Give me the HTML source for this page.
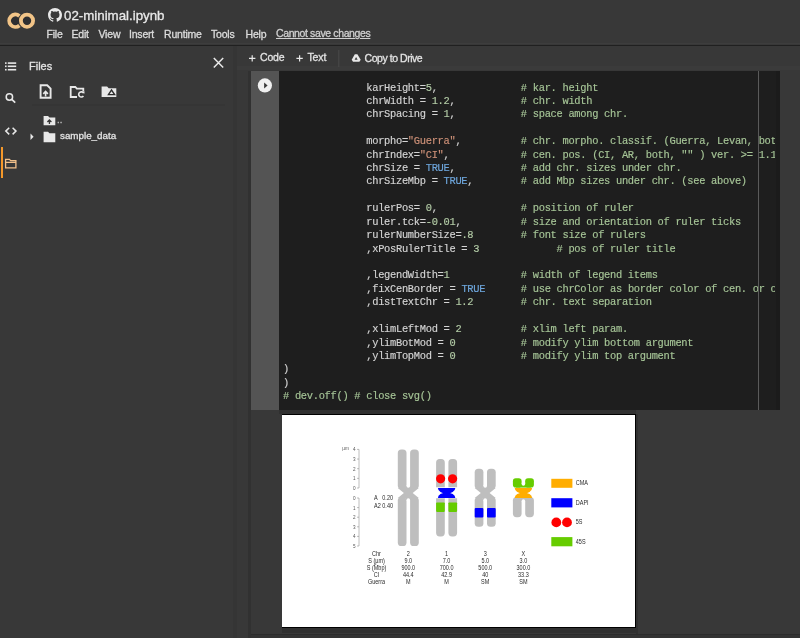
<!DOCTYPE html>
<html><head><meta charset="utf-8">
<style>
*{margin:0;padding:0;box-sizing:border-box}
html,body{width:800px;height:638px;overflow:hidden;background:#383838;will-change:transform;font-family:"Liberation Sans",sans-serif;color:#e3e3e3}
.a{position:absolute}
.t{position:absolute;white-space:pre;line-height:1;-webkit-text-stroke:0.3px currentColor}
#hdrline{left:0;top:45px;width:800px;height:1px;background:#202020}
.menu{font-size:10.5px;color:#dcdcdc;top:28.8px;letter-spacing:-0.2px}
#code{left:279px;top:71px;width:501px;height:338.5px;background:#1e1e1e;overflow:hidden}
#clip{position:absolute;left:0;top:0;width:496px;height:339px;overflow:hidden}
#ruler{left:479px;top:0;width:1px;height:339px;background:#5a5a5a}
#gut{left:251px;top:71px;width:28px;height:338.5px;background:#545454}
pre.c{position:absolute;left:4px;top:0;font-family:"Liberation Mono",monospace;font-size:10.4px;letter-spacing:-0.29px;line-height:13.42px;color:#d4d4d4;white-space:pre;-webkit-text-stroke:0.15px currentColor}
.cm{color:#a6c597}
.n{color:#b5cea8}
.s{color:#ce9178}
.k{color:#6ea6dc}
.ui{fill:none;stroke:#e8e8e8}
</style></head><body>
<div class="a" style="left:0;top:43px;width:800px;height:1px;background:#3d3d3d"></div><div id="hdrline" class="a"></div><div class="a" style="left:237px;top:66px;width:563px;height:4px;background:#3b3b3b"></div>
<!-- logo -->
<svg class="a" style="left:0;top:0" width="45" height="45" viewBox="0 0 45 45">
  <circle cx="15.4" cy="20.7" r="4.3" fill="#2e2e30"/><circle cx="27" cy="20.7" r="4.2" fill="#2e2e30"/>
  <path d="M19.39 15.95 A6.2 6.2 0 1 0 19.39 25.45" fill="none" stroke="#f2c487" stroke-width="3.8"/>
  <circle cx="27" cy="20.7" r="6.1" fill="none" stroke="#f2c487" stroke-width="3.8"/>
</svg>
<!-- github icon -->
<svg class="a" style="left:48px;top:8px" width="14" height="14" viewBox="0 0 16 16"><path fill="#e8e8e8" d="M8 0C3.58 0 0 3.58 0 8c0 3.54 2.29 6.53 5.47 7.59.4.07.55-.17.55-.38v-1.34c-2.23.48-2.7-1.07-2.7-1.07-.36-.92-.89-1.17-.89-1.17-.73-.5.06-.49.06-.49.8.06 1.23.83 1.230.83.72 1.22 1.87.87 2.33.66.07-.52.28-.87.51-1.07-1.78-.2-3.65-.89-3.65-3.95 0-.87.31-1.59.82-2.15-.08-.2-.36-1.02.08-2.12 0 0 .67-.21 2.2.82a7.6 7.6 0 0 1 4 0c1.53-1.04 2.2-.82 2.2-.82.44 1.1.16 1.92.08 2.12.51.56.82 1.27.82 2.15 0 3.07-1.87 3.75-3.65 3.95.29.25.54.73.54 1.48v2.2c0 .21.15.46.55.38A8 8 0 0 0 16 8c0-4.42-3.58-8-8-8z"/></svg>
<div class="t" style="left:64px;top:8.8px;font-size:13.3px;color:#e8e8e8">02-minimal.ipynb</div>
<div class="t menu" style="left:46.5px">File</div>
<div class="t menu" style="left:71.5px">Edit</div>
<div class="t menu" style="left:98.5px">View</div>
<div class="t menu" style="left:129px">Insert</div>
<div class="t menu" style="left:164px">Runtime</div>
<div class="t menu" style="left:211px">Tools</div>
<div class="t menu" style="left:245.5px">Help</div>
<div class="t menu" style="left:276px;top:28.3px;letter-spacing:-0.38px;color:#cfcfcf;text-decoration:underline">Cannot save changes</div>

<!-- left rail -->
<svg class="a" style="left:0;top:46px" width="232" height="140" viewBox="0 46 232 140">
  <!-- list icon -->
  <g fill="#e8e8e8"><rect x="5" y="62.3" width="1.6" height="1.6"/><rect x="5" y="65.5" width="1.6" height="1.6"/><rect x="5" y="68.9" width="1.6" height="1.6"/>
  <rect x="7.8" y="62.3" width="8.4" height="1.6"/><rect x="7.8" y="65.5" width="8.4" height="1.6"/><rect x="7.8" y="68.9" width="8.4" height="1.6"/></g>
  <!-- search -->
  <circle cx="9.4" cy="97" r="3.2" class="ui" stroke-width="1.5"/>
  <path d="M11.8 99.4 L15.2 102.6" class="ui" stroke-width="1.7"/>
  <!-- code -->
  <path d="M9.2 127.8 L5.8 131.1 L9.2 134.4 M12.6 127.8 L16 131.1 L12.6 134.4" class="ui" stroke-width="1.5"/>
  <!-- X close -->
  <path d="M213.8 58 L223.2 67.6 M223.2 58 L213.8 67.6" class="ui" stroke-width="1.5"/>
  <!-- upload file icon -->
  <path d="M40.6 85.3 h6.6 l3.4 3.4 v9.1 h-10 z" class="ui" stroke-width="1.9"/>
  <path d="M45.6 96.5 v-4.4 M43.3 93.9 l2.3 -2.4 l2.3 2.4" class="ui" stroke-width="1.6"/>
  <!-- folder refresh -->
  <path d="M77 97 h-6.3 v-10 h4.6 l1.5 1.6 h6.5 v3" class="ui" stroke-width="1.8"/>
  <circle cx="81.2" cy="94.4" r="3.6" fill="#383838"/><path d="M83.6 93.2 A2.6 2.6 0 1 0 83.4 96" class="ui" stroke-width="1.6"/><path d="M82.4 91.4 L84.6 91.6 L84.2 93.9 z" fill="#e8e8e8"/>
  <!-- drive folder -->
  <path d="M101.6 86.6 h5.5 l1.6 1.7 h7.6 v8.8 h-14.7 z" fill="#e8e8e8"/>
  <path d="M107.2 95.2 L111.5 88.8 L115.9 95.2 z" fill="#2a2a2a"/><path d="M109.6 94 L111.5 91.2 L113.4 94 z" fill="#e8e8e8"/>
  <!-- separator -->
  <rect x="32" y="104.5" width="193" height="1" fill="#333"/>
  <!-- folder-up -->
  <path d="M43.6 116 h4.4 l1.5 1.5 h5.8 v7.7 h-11.7 z" fill="#e8e8e8"/>
  <path d="M49.4 124 v-3.7 M47.4 122 l2 -2 l2 2" stroke="#383838" stroke-width="1.3" fill="none"/>
  <!-- arrow -->
  <path d="M30.5 133.6 L33.6 136.8 L30.5 140 z" fill="#e8e8e8"/>
  <!-- folder -->
  <path d="M43.6 131.8 h4.4 l1.5 1.5 h5.8 v9 h-11.7 z" fill="#e8e8e8"/>
  <!-- rail folder (selected) -->
  <rect x="1" y="147" width="2" height="31" fill="#f5982a"/>
  <path d="M5.6 159.4 h3.8 l1.3 1.3 h5.2 v7.2 h-10.3 z M5.6 162.4 h10.3" fill="none" stroke="#f2c08a" stroke-width="1.3"/>
</svg>
<div class="t" style="left:29px;top:60.7px;font-size:11px;color:#e3e3e3">Files</div>
<div class="t" style="left:57px;top:115px;font-size:9.5px;color:#bbb">..</div>
<div class="t" style="left:60px;top:131px;font-size:9.8px;color:#e3e3e3">sample_data</div>

<!-- panel divider -->
<div class="a" style="left:233px;top:46px;width:4px;height:592px;background:#353535"></div>
<div class="a" style="left:248px;top:71px;width:3px;height:567px;background:#313131"></div>

<!-- toolbar -->
<svg class="a" style="left:240px;top:46px" width="200" height="25" viewBox="240 46 200 25">
  <path d="M252.2 55.2 v6.4 M249 58.4 h6.4" class="ui" stroke-width="1.2"/>
  <path d="M299.6 55.2 v6.4 M296.4 58.4 h6.4" class="ui" stroke-width="1.2"/>
  <rect x="338.3" y="50" width="1" height="17" fill="#4a4a4a"/>
  <path d="M354.8 54.2 h2.6 l3.3 5.6 l-1.3 2 h-6.4 l-1.3 -2 z" fill="#e8e8e8"/>
  <path d="M354.6 59.7 l1.5 -2.6 l1.5 2.6 z" fill="#383838"/>
</svg>
<div class="t" style="left:260px;top:52.3px;font-size:10.5px;letter-spacing:-0.15px;color:#e3e3e3">Code</div>
<div class="t" style="left:307.5px;top:52.3px;font-size:10.5px;letter-spacing:-0.15px;color:#e3e3e3">Text</div>
<div class="t" style="left:364.5px;top:52.6px;font-size:10.5px;letter-spacing:-0.45px;color:#e3e3e3">Copy to Drive</div>

<!-- code cell -->
<div id="gut" class="a"></div>
<svg class="a" style="left:256px;top:77px" width="18" height="18" viewBox="0 0 18 18">
  <circle cx="8.9" cy="8.4" r="7.1" fill="#f0f0f0"/>
  <path d="M8.1 5.5 L11.6 8.5 L8.1 11.4 z" fill="#3a3a3a"/>
</svg>
<div id="code" class="a">
<div id="clip"><pre class="c" style="top:10.5px">              karHeight=<span class="n">5</span>,              <span class="cm"># kar. height</span>
              chrWidth = <span class="n">1.2</span>,           <span class="cm"># chr. width</span>
              chrSpacing = <span class="n">1</span>,           <span class="cm"># space among chr.</span>

              morpho=<span class="s">"Guerra"</span>,          <span class="cm"># chr. morpho. classif. (Guerra, Levan, both, "" ) ver. &gt;= 1.1.0.0</span>
              chrIndex=<span class="s">"CI"</span>,            <span class="cm"># cen. pos. (CI, AR, both, "" ) ver. &gt;= 1.1.0.0</span>
              chrSize = <span class="k">TRUE</span>,           <span class="cm"># add chr. sizes under chr.</span>
              chrSizeMbp = <span class="k">TRUE</span>,        <span class="cm"># add Mbp sizes under chr. (see above)</span>

              rulerPos= <span class="n">0</span>,              <span class="cm"># position of ruler</span>
              ruler.tck=<span class="n">-0.01</span>,          <span class="cm"># size and orientation of ruler ticks</span>
              rulerNumberSize=<span class="n">.8</span>        <span class="cm"># font size of rulers</span>
              ,xPosRulerTitle = <span class="n">3</span>             <span class="cm"># pos of ruler title</span>

              ,legendWidth=<span class="n">1</span>            <span class="cm"># width of legend items</span>
              ,fixCenBorder = <span class="k">TRUE</span>      <span class="cm"># use chrColor as border color of cen. or cen. type</span>
              ,distTextChr = <span class="n">1.2</span>        <span class="cm"># chr. text separation</span>

              ,xlimLeftMod = <span class="n">2</span>          <span class="cm"># xlim left param.</span>
              ,ylimBotMod = <span class="n">0</span>           <span class="cm"># modify ylim bottom argument</span>
              ,ylimTopMod = <span class="n">0</span>           <span class="cm"># modify ylim top argument</span>
)
)
<span class="cm"># dev.off() # close svg()</span></pre></div>
<div id="ruler" class="a"></div><div class="a" style="left:497px;top:0;width:4px;height:339px;background:#1b1b1b"></div>
</div>

<!-- output -->
<div class="a" style="left:279px;top:409.5px;width:357px;height:4.5px;background:#303030"></div>
<div class="a" style="left:251px;top:634px;width:549px;height:1px;background:#2c2c2c"></div>
<div class="a" style="left:251px;top:635px;width:549px;height:3px;background:#333"></div>
<div class="a" style="left:636px;top:414px;width:2px;height:220px;background:#303030"></div>
<div class="a" style="left:282px;top:628px;width:356px;height:5px;background:#303030"></div>
<div class="a" style="left:282px;top:414px;width:354px;height:214px;background:#000"></div>
<svg class="a" style="left:282px;top:415px" width="353" height="212" viewBox="0 0 353 212">
  <rect x="0" y="0" width="353" height="212" fill="#fff"/>
  <g stroke="#888" stroke-width="0.55" fill="none">
<path d="M77 34.40 V73.0 M77 83.0 V131.00"/>
<path d="M75 73.00 H77"/>
<path d="M75 63.35 H77"/>
<path d="M75 53.70 H77"/>
<path d="M75 44.05 H77"/>
<path d="M75 34.40 H77"/>
<path d="M75 83.00 H77"/>
<path d="M75 92.60 H77"/>
<path d="M75 102.20 H77"/>
<path d="M75 111.80 H77"/>
<path d="M75 121.40 H77"/>
<path d="M75 131.00 H77"/>
</g>
<text transform="translate(72.40 74.94) scale(0.86 1)" font-size="5.4" text-anchor="middle" fill="#555">0</text>
<text transform="translate(72.40 65.29) scale(0.86 1)" font-size="5.4" text-anchor="middle" fill="#555">1</text>
<text transform="translate(72.40 55.64) scale(0.86 1)" font-size="5.4" text-anchor="middle" fill="#555">2</text>
<text transform="translate(72.40 45.99) scale(0.86 1)" font-size="5.4" text-anchor="middle" fill="#555">3</text>
<text transform="translate(72.40 36.34) scale(0.86 1)" font-size="5.4" text-anchor="middle" fill="#555">4</text>
<text transform="translate(72.40 84.94) scale(0.86 1)" font-size="5.4" text-anchor="middle" fill="#555">0</text>
<text transform="translate(72.40 94.54) scale(0.86 1)" font-size="5.4" text-anchor="middle" fill="#555">1</text>
<text transform="translate(72.40 104.14) scale(0.86 1)" font-size="5.4" text-anchor="middle" fill="#555">2</text>
<text transform="translate(72.40 113.74) scale(0.86 1)" font-size="5.4" text-anchor="middle" fill="#555">3</text>
<text transform="translate(72.40 123.34) scale(0.86 1)" font-size="5.4" text-anchor="middle" fill="#555">4</text>
<text transform="translate(72.40 132.94) scale(0.86 1)" font-size="5.4" text-anchor="middle" fill="#555">5</text>
<text transform="translate(63.50 35.44) scale(0.86 1)" font-size="5.4" text-anchor="middle" fill="#555">µm</text>
<text transform="translate(111.00 85.10) scale(0.86 1)" font-size="6.4" text-anchor="end" fill="#2a2a2a">0.20</text>
<text transform="translate(92.00 85.10) scale(0.86 1)" font-size="6.4" text-anchor="start" fill="#2a2a2a">A</text>
<text transform="translate(111.00 92.70) scale(0.86 1)" font-size="6.4" text-anchor="end" fill="#2a2a2a">A2 0.40</text>
<rect x="115.80" y="34.40" width="8.70" height="39.60" rx="3.6" fill="#bebebe"/>
<rect x="128.10" y="34.40" width="8.70" height="39.60" rx="3.6" fill="#bebebe"/>
<rect x="115.80" y="82.00" width="8.70" height="49.00" rx="3.6" fill="#bebebe"/>
<rect x="128.10" y="82.00" width="8.70" height="49.00" rx="3.6" fill="#bebebe"/>
<rect x="123.50" y="71.00" width="5.60" height="3" fill="#bebebe"/>
<circle cx="126.30" cy="71.00" r="1.80" fill="#fff"/>
<rect x="123.50" y="82.00" width="5.60" height="3" fill="#bebebe"/>
<circle cx="126.30" cy="85.00" r="1.80" fill="#fff"/>
<path d="M115.80 73.0 L136.80 73.0 L130.70 78.00 L136.80 83.0 L115.80 83.0 L121.90 78.00 Z" fill="#bebebe"/>
<rect x="192.70" y="53.70" width="8.70" height="20.30" rx="3.6" fill="#bebebe"/>
<rect x="205.00" y="53.70" width="8.70" height="20.30" rx="3.6" fill="#bebebe"/>
<rect x="192.70" y="82.00" width="8.70" height="29.80" rx="3.6" fill="#bebebe"/>
<rect x="205.00" y="82.00" width="8.70" height="29.80" rx="3.6" fill="#bebebe"/>
<rect x="200.40" y="71.00" width="5.60" height="3" fill="#bebebe"/>
<circle cx="203.20" cy="71.00" r="1.80" fill="#fff"/>
<rect x="200.40" y="82.00" width="5.60" height="3" fill="#bebebe"/>
<circle cx="203.20" cy="85.00" r="1.80" fill="#fff"/>
<path d="M192.70 73.0 L213.70 73.0 L207.60 78.00 L213.70 83.0 L192.70 83.0 L198.80 78.00 Z" fill="#bebebe"/>
<rect x="192.70" y="93.00" width="8.70" height="9.40" rx="1" fill="#0000ff"/>
<rect x="205.00" y="93.00" width="8.70" height="9.40" rx="1" fill="#0000ff"/>
<path d="M154.10 72.30 V47.65 A3.6 3.6 0 0 1 157.70 44.05 H159.20 A3.6 3.6 0 0 1 162.80 47.65 V72.30 Z" fill="#bebebe"/>
<path d="M154.10 83.20 V117.80 A3.6 3.6 0 0 0 157.70 121.40 H159.20 A3.6 3.6 0 0 0 162.80 117.80 V83.20 Z" fill="#bebebe"/>
<rect x="154.10" y="87.50" width="8.70" height="9.40" rx="0.8" fill="#66cc00"/>
<path d="M166.40 72.30 V47.65 A3.6 3.6 0 0 1 170.00 44.05 H171.50 A3.6 3.6 0 0 1 175.10 47.65 V72.30 Z" fill="#bebebe"/>
<path d="M166.40 83.20 V117.80 A3.6 3.6 0 0 0 170.00 121.40 H171.50 A3.6 3.6 0 0 0 175.10 117.80 V83.20 Z" fill="#bebebe"/>
<rect x="166.40" y="87.50" width="8.70" height="9.40" rx="0.8" fill="#66cc00"/>
<path d="M155.90 73.0 H173.30 A8.7 5.5 0 0 1 155.90 73.0 Z" fill="#0000ff"/>
<path d="M155.90 83.0 H173.30 A8.7 5.5 0 0 0 155.90 83.0 Z" fill="#0000ff"/>
<circle cx="158.60" cy="63.8" r="4.6" fill="#ff0000"/><circle cx="170.60" cy="63.8" r="4.6" fill="#ff0000"/>
<rect x="230.90" y="82.00" width="8.70" height="20.20" rx="3.6" fill="#bebebe"/>
<rect x="243.20" y="82.00" width="8.70" height="20.20" rx="3.6" fill="#bebebe"/>
<rect x="238.60" y="82.00" width="5.60" height="4" fill="#bebebe"/>
<circle cx="241.40" cy="86.00" r="1.80" fill="#fff"/>
<rect x="230.90" y="63.35" width="8.70" height="9.25" rx="2.8" fill="#66cc00"/>
<rect x="243.20" y="63.35" width="8.70" height="9.25" rx="2.8" fill="#66cc00"/>
<rect x="233.90" y="69.00" width="15.00" height="3.6" fill="#66cc00"/>
<circle cx="241.40" cy="69.00" r="1.80" fill="#fff"/>
<path d="M232.70 73.0 H250.10 A8.7 5.5 0 0 1 232.70 73.0 Z" fill="#ffad00"/>
<path d="M232.70 83.0 H250.10 A8.7 5.5 0 0 0 232.70 83.0 Z" fill="#ffad00"/>
<rect x="269.30" y="63.80" width="21.10" height="9.00" rx="0" fill="#ffad00"/>
<rect x="269.30" y="83.20" width="21.10" height="9.20" rx="0" fill="#0000ff"/>
<circle cx="274.3" cy="107.4" r="4.9" fill="#ff0000"/><circle cx="285" cy="107.4" r="4.9" fill="#ff0000"/>
<rect x="269.30" y="122.10" width="21.10" height="9.20" rx="0" fill="#66cc00"/>
<text transform="translate(293.80 70.30) scale(0.86 1)" font-size="6.4" text-anchor="start" fill="#2a2a2a">CMA</text>
<text transform="translate(293.80 89.90) scale(0.86 1)" font-size="6.4" text-anchor="start" fill="#2a2a2a">DAPI</text>
<text transform="translate(293.80 109.30) scale(0.86 1)" font-size="6.4" text-anchor="start" fill="#2a2a2a">5S</text>
<text transform="translate(293.80 128.80) scale(0.86 1)" font-size="6.4" text-anchor="start" fill="#2a2a2a">45S</text>
<text transform="translate(94.50 140.80) scale(0.86 1)" font-size="6.4" text-anchor="middle" fill="#2a2a2a">Chr</text>
<text transform="translate(126.30 140.80) scale(0.86 1)" font-size="6.4" text-anchor="middle" fill="#2a2a2a">2</text>
<text transform="translate(164.60 140.80) scale(0.86 1)" font-size="6.4" text-anchor="middle" fill="#2a2a2a">1</text>
<text transform="translate(203.20 140.80) scale(0.86 1)" font-size="6.4" text-anchor="middle" fill="#2a2a2a">3</text>
<text transform="translate(241.40 140.80) scale(0.86 1)" font-size="6.4" text-anchor="middle" fill="#2a2a2a">X</text>
<text transform="translate(94.50 147.85) scale(0.86 1)" font-size="6.4" text-anchor="middle" fill="#2a2a2a">S (µm)</text>
<text transform="translate(126.30 147.85) scale(0.86 1)" font-size="6.4" text-anchor="middle" fill="#2a2a2a">9.0</text>
<text transform="translate(164.60 147.85) scale(0.86 1)" font-size="6.4" text-anchor="middle" fill="#2a2a2a">7.0</text>
<text transform="translate(203.20 147.85) scale(0.86 1)" font-size="6.4" text-anchor="middle" fill="#2a2a2a">5.0</text>
<text transform="translate(241.40 147.85) scale(0.86 1)" font-size="6.4" text-anchor="middle" fill="#2a2a2a">3.0</text>
<text transform="translate(94.50 154.90) scale(0.86 1)" font-size="6.4" text-anchor="middle" fill="#2a2a2a">S (Mbp)</text>
<text transform="translate(126.30 154.90) scale(0.86 1)" font-size="6.4" text-anchor="middle" fill="#2a2a2a">900.0</text>
<text transform="translate(164.60 154.90) scale(0.86 1)" font-size="6.4" text-anchor="middle" fill="#2a2a2a">700.0</text>
<text transform="translate(203.20 154.90) scale(0.86 1)" font-size="6.4" text-anchor="middle" fill="#2a2a2a">500.0</text>
<text transform="translate(241.40 154.90) scale(0.86 1)" font-size="6.4" text-anchor="middle" fill="#2a2a2a">300.0</text>
<text transform="translate(94.50 161.95) scale(0.86 1)" font-size="6.4" text-anchor="middle" fill="#2a2a2a">CI</text>
<text transform="translate(126.30 161.95) scale(0.86 1)" font-size="6.4" text-anchor="middle" fill="#2a2a2a">44.4</text>
<text transform="translate(164.60 161.95) scale(0.86 1)" font-size="6.4" text-anchor="middle" fill="#2a2a2a">42.9</text>
<text transform="translate(203.20 161.95) scale(0.86 1)" font-size="6.4" text-anchor="middle" fill="#2a2a2a">40</text>
<text transform="translate(241.40 161.95) scale(0.86 1)" font-size="6.4" text-anchor="middle" fill="#2a2a2a">33.3</text>
<text transform="translate(94.50 169.00) scale(0.86 1)" font-size="6.4" text-anchor="middle" fill="#2a2a2a">Guerra</text>
<text transform="translate(126.30 169.00) scale(0.86 1)" font-size="6.4" text-anchor="middle" fill="#2a2a2a">M</text>
<text transform="translate(164.60 169.00) scale(0.86 1)" font-size="6.4" text-anchor="middle" fill="#2a2a2a">M</text>
<text transform="translate(203.20 169.00) scale(0.86 1)" font-size="6.4" text-anchor="middle" fill="#2a2a2a">SM</text>
<text transform="translate(241.40 169.00) scale(0.86 1)" font-size="6.4" text-anchor="middle" fill="#2a2a2a">SM</text>
</svg>
</body></html>
